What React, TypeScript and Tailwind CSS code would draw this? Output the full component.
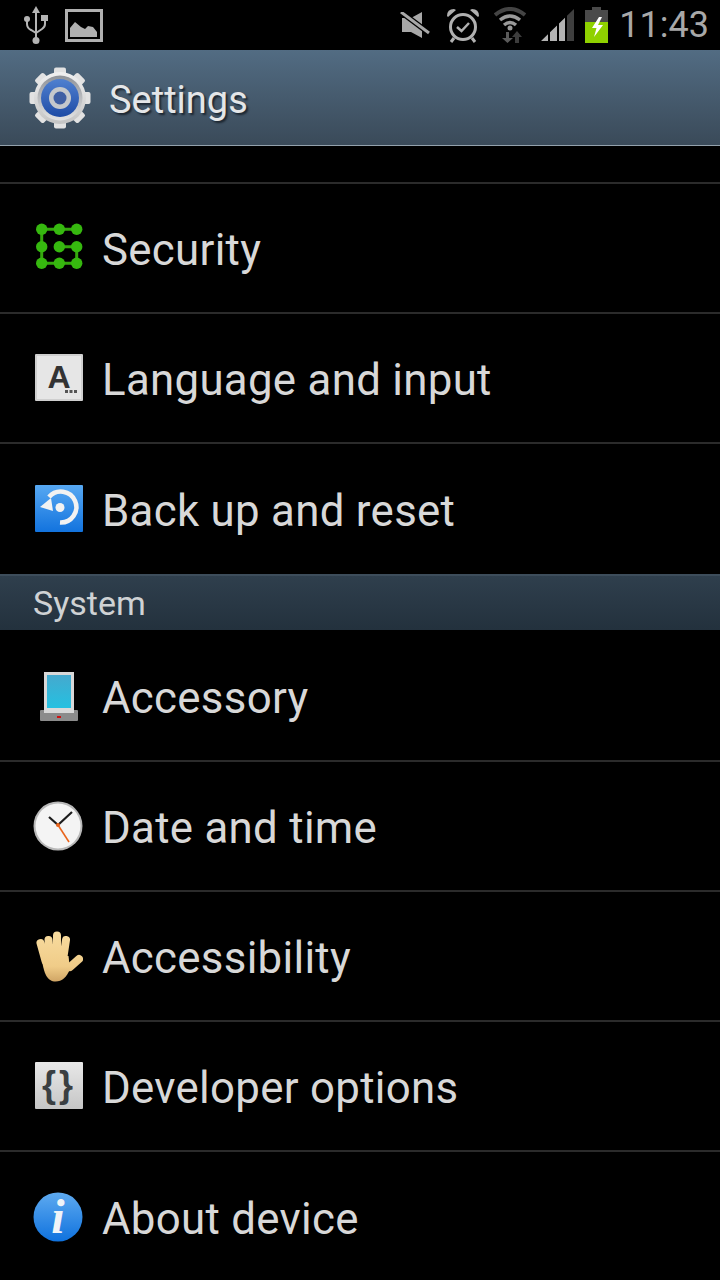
import React from "react";

type RowProps = {
  icon: React.ReactNode;
  label: string;
  divider?: boolean;
};

function Row({ icon, label, divider = true }: RowProps) {
  return (
    <div
      className={`flex h-[130px] items-center pl-[33px] ${
        divider ? "border-b-2 border-[#2b2b2b]" : ""
      }`}
    >
      {icon}
      <span className="ml-[19px] pt-[5px] text-[43.8px] leading-none tracking-[0.3px] text-[#d8d8d8]">
        {label}
      </span>
    </div>
  );
}

const UsbIcon = () => (
  <svg width="24" height="38" viewBox="0 0 24 38" fill="none">
    <path d="M12 0l-4 7h8z" fill="#b4b4b4" />
    <path d="M12 5v28" stroke="#b4b4b4" strokeWidth="2" />
    <path d="M3 14v4q0 4 4 6l5 3M21 15v3q0 3-3 5l-6 4" stroke="#b4b4b4" strokeWidth="2" />
    <circle cx="3" cy="13" r="3" fill="#b4b4b4" />
    <rect x="17" y="9" width="7" height="6" fill="#b4b4b4" />
    <circle cx="12" cy="34.500" r="3.500" fill="#b4b4b4" />
  </svg>
);

const PictureIcon = () => (
  <svg width="38" height="33" viewBox="0 0 38 33">
    <rect x="1.500" y="1.500" width="35" height="30" fill="#000" stroke="#b0b0b0" strokeWidth="3" />
    <path d="M5 28V19l5-6 6 5 4 2 3-3 5 1 4 5v5z" fill="#b0b0b0" />
  </svg>
);

const MuteIcon = () => (
  <svg width="30" height="26" viewBox="0 0 30 26">
    <path d="M2 6h9l11-6v26l-11-6H2z" fill="#a8a8a8" />
    <path d="M1 0l28 21" stroke="#000" strokeWidth="5.500" />
    <path d="M1 0l28 21" stroke="#a8a8a8" strokeWidth="3" />
  </svg>
);

const AlarmIcon = () => (
  <svg width="34" height="35" viewBox="0 0 34 35" fill="none">
    <circle cx="17" cy="19" r="12.500" stroke="#b0b0b0" strokeWidth="3" />
    <path d="M11 19l4.500 4 7.500-8" stroke="#b0b0b0" strokeWidth="2.500" />
    <path d="M1 8q0-7 7-7l2 1-8 7zM33 8q0-7-7-7l-2 1 8 7z" fill="#b0b0b0" />
    <path d="M8 30l-3 4M26 30l3 4" stroke="#b0b0b0" strokeWidth="3" />
  </svg>
);

const WifiIcon = () => (
  <svg width="32" height="36" viewBox="0 0 32 36" fill="none">
    <path d="M1 8q15-12 30 0" stroke="#444" strokeWidth="4" />
    <path d="M6 13q10-8 20 0" stroke="#9a9a9a" strokeWidth="3.500" />
    <path d="M10 18q6-5 12 0" stroke="#9a9a9a" strokeWidth="3.500" />
    <circle cx="16" cy="21" r="2.500" fill="#9a9a9a" />
    <path d="M12 25v6h-4l5.500 5 5.500-5h-4v-6z" fill="#5a5a5a" />
    <path d="M21 36v-6h-3l5-6 5 6h-3v6z" fill="#3c3c3c" />
  </svg>
);

const SignalIcon = () => (
  <svg width="33" height="32" viewBox="0 0 33 32">
    <path d="M26 6.800L33 0v32h-7z" fill="#3f3f3f" />
    <path d="M0 32l7-6.800V32zM9 23.300l7-6.800V32H9zM18 14.500l6-5.800V32h-6z" fill="#b4b4b4" />
  </svg>
);

const BatteryIcon = () => (
  <svg width="23" height="36" viewBox="0 0 23 36">
    <rect x="7" y="0" width="9" height="3" fill="#4a4a4a" />
    <rect x="0" y="3" width="23" height="12" fill="#4a4a4a" />
    <rect x="0" y="15" width="23" height="21" fill="#8fd100" />
    <path d="M14 10L7 21h4.500L9 30l9-12h-5l4-8z" fill="#fff" />
  </svg>
);

const GearIcon = () => {
  const teeth = [0, 45, 90, 135, 180, 225, 270, 315];
  return (
    <svg width="62" height="62" viewBox="0 0 62 62">
      <defs>
        <linearGradient id="gearBody" x1="0" y1="0" x2="0" y2="1">
          <stop offset="0" stopColor="#f0f0f0" />
          <stop offset="1" stopColor="#c4c4c4" />
        </linearGradient>
        <linearGradient id="gearRing" x1="0" y1="0" x2="0" y2="1">
          <stop offset="0" stopColor="#8f9399" />
          <stop offset="1" stopColor="#e4e4e4" />
        </linearGradient>
        <linearGradient id="gearBlue" x1="0" y1="0" x2="0" y2="1">
          <stop offset="0" stopColor="#4f80d0" />
          <stop offset="1" stopColor="#1f4ca6" />
        </linearGradient>
      </defs>
      {teeth.map((a) => (
        <rect
          key={a}
          x="25"
          y="0.500"
          width="12"
          height="12"
          rx="2"
          fill="#e2e2e2"
          transform={`rotate(${a} 31 31)`}
        />
      ))}
      <circle cx="31" cy="31" r="26" fill="url(#gearBody)" />
      <circle cx="31" cy="31" r="22.500" fill="url(#gearRing)" />
      <circle cx="31" cy="31" r="19" fill="url(#gearBlue)" />
      <circle cx="31" cy="31" r="11" fill="#c4c8cc" />
      <circle cx="31" cy="31" r="6.500" fill="#3e5fa4" />
    </svg>
  );
};

const SecurityIcon = () => {
  const nodes = [
    [8.700, 6.300],
    [26.300, 6.300],
    [43.700, 6.300],
    [8.700, 23.700],
    [26.300, 23.700],
    [43.700, 23.700],
    [8.700, 40.300],
    [26.300, 40.300],
    [43.700, 40.300],
  ];
  return (
    <svg width="50" height="50" viewBox="0 0 50 50" fill="none">
      <path
        d="M26.300 23.700H43.700V40.300H8.700V6.300H43.700"
        stroke="#35a80e"
        strokeWidth="3"
      />
      {nodes.map(([x, y]) => (
        <circle key={`${x}-${y}`} cx={x} cy={y} r="5.700" fill="#36b80f" />
      ))}
    </svg>
  );
};

const LanguageIcon = () => (
  <svg width="50" height="50" viewBox="0 0 50 50">
    <rect x="2" y="1" width="48" height="47" rx="1" fill="#cfcfcf" />
    <rect x="4" y="3" width="44" height="43" fill="#e6e6e6" />
    <text
      x="26"
      y="35"
      textAnchor="middle"
      fontSize="32"
      fontWeight="700"
      fontFamily="'Liberation Sans', sans-serif"
      fill="#333"
    >
      A
    </text>
    <rect x="32" y="37" width="3" height="3" fill="#555" />
    <rect x="36.500" y="37" width="3" height="3" fill="#555" />
    <rect x="41" y="37" width="3" height="3" fill="#555" />
  </svg>
);

const BackupIcon = () => (
  <svg width="50" height="50" viewBox="0 0 50 50" fill="none">
    <defs>
      <linearGradient id="backupBg" x1="0" y1="0" x2="0" y2="1">
        <stop offset="0" stopColor="#57a8f2" />
        <stop offset="1" stopColor="#1273de" />
      </linearGradient>
    </defs>
    <rect x="2" y="1" width="48" height="47" rx="1" fill="url(#backupBg)" />
    <path d="M16 13A15.500 15.500 0 1 1 27 38.500" stroke="#f2f2f2" strokeWidth="4.500" />
    <path d="M7 23l11-9 2 13z" fill="#f2f2f2" />
    <circle cx="27" cy="23.500" r="4.500" fill="#f2f2f2" />
  </svg>
);

const AccessoryIcon = () => (
  <svg width="50" height="50" viewBox="0 0 50 50">
    <defs>
      <linearGradient id="screenBg" x1="0" y1="0" x2="0" y2="1">
        <stop offset="0" stopColor="#45a9ce" />
        <stop offset="1" stopColor="#22c2e2" />
      </linearGradient>
    </defs>
    <rect x="11" y="1" width="30" height="42" fill="#d8d8d8" />
    <rect x="14" y="4" width="24" height="35" fill="url(#screenBg)" />
    <rect x="7" y="39" width="38" height="11" rx="1" fill="#8b8b8b" />
    <rect x="11" y="37" width="30" height="5" fill="#d8d8d8" />
    <rect x="24" y="45" width="4" height="2" fill="#d01010" />
  </svg>
);

const ClockIcon = () => (
  <svg width="50" height="50" viewBox="0 0 50 50" fill="none">
    <circle cx="25" cy="25" r="24.500" fill="#b8b8b8" />
    <circle cx="25" cy="25" r="22.500" fill="#f4f4f4" />
    <path d="M25 24l-9-8M25 24l14-13" stroke="#1c1c1c" strokeWidth="2.200" />
    <path d="M25 24l11 17" stroke="#e8641c" strokeWidth="1.600" />
    <circle cx="25" cy="24" r="2" fill="#e8641c" />
  </svg>
);

const HandIcon = () => (
  <svg width="50" height="52" viewBox="0 0 50 52" fill="none">
    <defs>
      <linearGradient id="handBg" gradientUnits="userSpaceOnUse" x1="0" y1="0" x2="0" y2="52">
        <stop offset="0" stopColor="#f8dca0" />
        <stop offset="0.700" stopColor="#f0cc88" />
        <stop offset="1" stopColor="#cfa464" />
      </linearGradient>
    </defs>
    <g stroke="url(#handBg)" strokeWidth="8" strokeLinecap="round">
      <path d="M7.500 13l5 18M15.500 10l2 20M24 5.500V28M33 10l-3 20M46 29l-9 8" />
    </g>
    <path
      d="M8.500 26h27l1.500 13c-3 8-8 12.500-14.500 12.500-8 0-12-7-14-25.500z"
      fill="url(#handBg)"
    />
  </svg>
);

const DeveloperIcon = () => (
  <svg width="50" height="50" viewBox="0 0 50 50" overflow="visible">
    <defs>
      <linearGradient id="devBg" x1="0" y1="0" x2="0" y2="1">
        <stop offset="0" stopColor="#e8e8e8" />
        <stop offset="1" stopColor="#c6c6c6" />
      </linearGradient>
    </defs>
    <rect x="2" y="1" width="48" height="47" rx="1" fill="url(#devBg)" />
    <text
      x="26"
      y="36"
      textAnchor="middle"
      fontSize="36"
      fontWeight="700"
      letterSpacing="3"
      fontFamily="'Liberation Sans', sans-serif"
      fill="#3a3f42"
    >
      {"{}"}
    </text>
  </svg>
);

const InfoIcon = () => (
  <svg width="50" height="50" viewBox="0 0 50 50" overflow="visible">
    <defs>
      <linearGradient id="infoBg" x1="0" y1="0" x2="0" y2="1">
        <stop offset="0" stopColor="#5eaaf0" />
        <stop offset="1" stopColor="#0f72de" />
      </linearGradient>
    </defs>
    <circle cx="25" cy="25" r="24.500" fill="url(#infoBg)" />
    <text
      x="25"
      y="41"
      textAnchor="middle"
      fontSize="48"
      fontWeight="700"
      fontStyle="italic"
      fontFamily="'Liberation Serif', serif"
      fill="#f0f4f8"
    >
      i
    </text>
  </svg>
);

export default function App() {
  return (
    <div className="h-[1280px] w-[720px] overflow-hidden bg-black font-['Roboto',sans-serif]">
      {/* status bar */}
      <div className="flex h-[50px] items-center justify-between pl-[24px] pr-[11px]">
        <div className="flex items-center gap-[17px]">
          <UsbIcon />
          <PictureIcon />
        </div>
        <div className="flex items-center">
          <MuteIcon />
          <div className="ml-[16px]">
            <AlarmIcon />
          </div>
          <div className="ml-[14px]">
            <WifiIcon />
          </div>
          <div className="ml-[15px]">
            <SignalIcon />
          </div>
          <div className="ml-[11px]">
            <BatteryIcon />
          </div>
          <span className="ml-[11px] text-[36px] leading-none text-[#a8a8a8]">
            11:43
          </span>
        </div>
      </div>

      {/* title bar */}
      <div className="flex h-[96px] items-center border-b border-[#93a1ac] bg-gradient-to-b from-[#526c83] to-[#3a4a59] pl-[29px]">
        <GearIcon />
        <span className="ml-[18px] pt-[5px] text-[38px] leading-none text-[#e4e6e8] [text-shadow:2px_2px_2px_#1c2630]">
          Settings
        </span>
      </div>

      <div className="h-[36px]" />
      <div className="h-[2px] bg-[#2b2b2b]" />

      <Row icon={<SecurityIcon />} label="Security" />
      <Row icon={<LanguageIcon />} label="Language and input" />
      <Row icon={<BackupIcon />} label="Back up and reset" divider={false} />

      {/* section header */}
      <div className="flex h-[56px] items-center border-t-2 border-[#3d4d5b] bg-gradient-to-b from-[#2f3f4d] to-[#23313d] pl-[33px]">
        <span className="text-[34px] leading-none text-[#cfd2d4]">System</span>
      </div>

      <div className="h-[2px]" />
      <Row icon={<AccessoryIcon />} label="Accessory" />
      <Row icon={<ClockIcon />} label="Date and time" />
      <Row icon={<HandIcon />} label="Accessibility" />
      <Row icon={<DeveloperIcon />} label="Developer options" />
      <Row icon={<InfoIcon />} label="About device" divider={false} />
    </div>
  );
}
